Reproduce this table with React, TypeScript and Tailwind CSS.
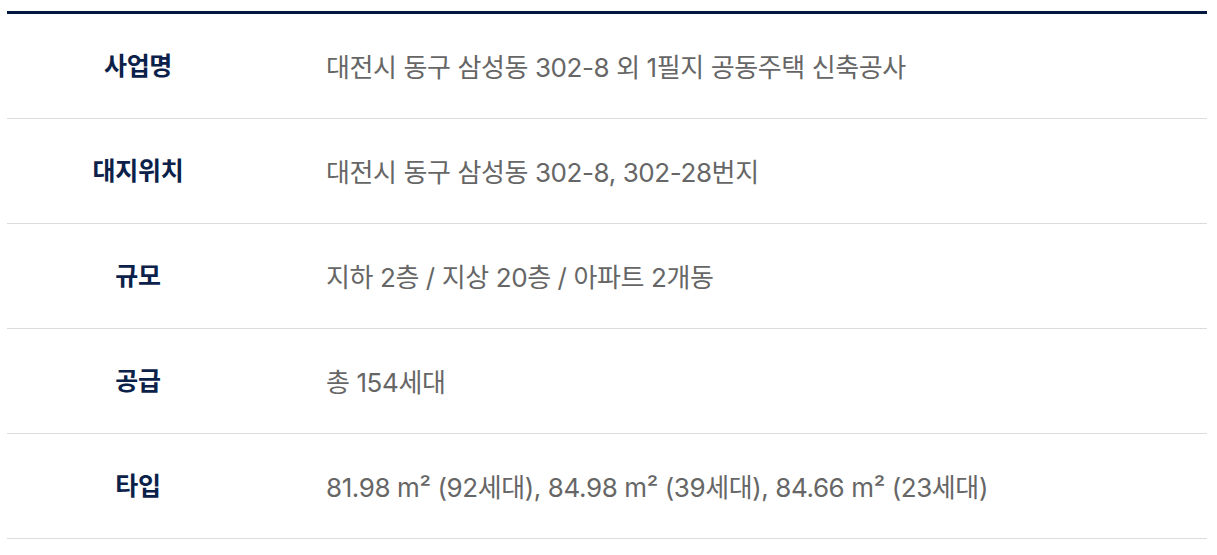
const rows = [
  { label: '사업명', value: '대전시 동구 삼성동 302-8 외 1필지 공동주택 신축공사' },
  { label: '대지위치', value: '대전시 동구 삼성동 302-8, 302-28번지' },
  { label: '규모', value: '지하 2층 / 지상 20층 / 아파트 2개동' },
  { label: '공급', value: '총 154세대' },
  { label: '타입', value: '81.98 m² (92세대), 84.98 m² (39세대), 84.66 m² (23세대)' },
]

export default function App() {
  return (
    <div className="bg-white w-[1217px] h-[555px] pt-[11px] px-[7px] font-['Inter','Noto_Sans_CJK_KR',sans-serif]">
      <div className="w-[1200px] border-t-[3px] border-[#03173f]">
        {rows.map((row) => (
          <div key={row.label} className="flex items-center h-[105px] border-b border-[#dcdcdc]">
            <div className="w-[262px] pt-[2px] text-center text-[25px] font-bold text-[#0b2149] tracking-[-0.3px]">
              {row.label}
            </div>
            <div className="pl-[57px] pt-[2px] text-[26px] text-[#666666] tracking-[-0.4px]">
              {row.value}
            </div>
          </div>
        ))}
      </div>
    </div>
  )
}
